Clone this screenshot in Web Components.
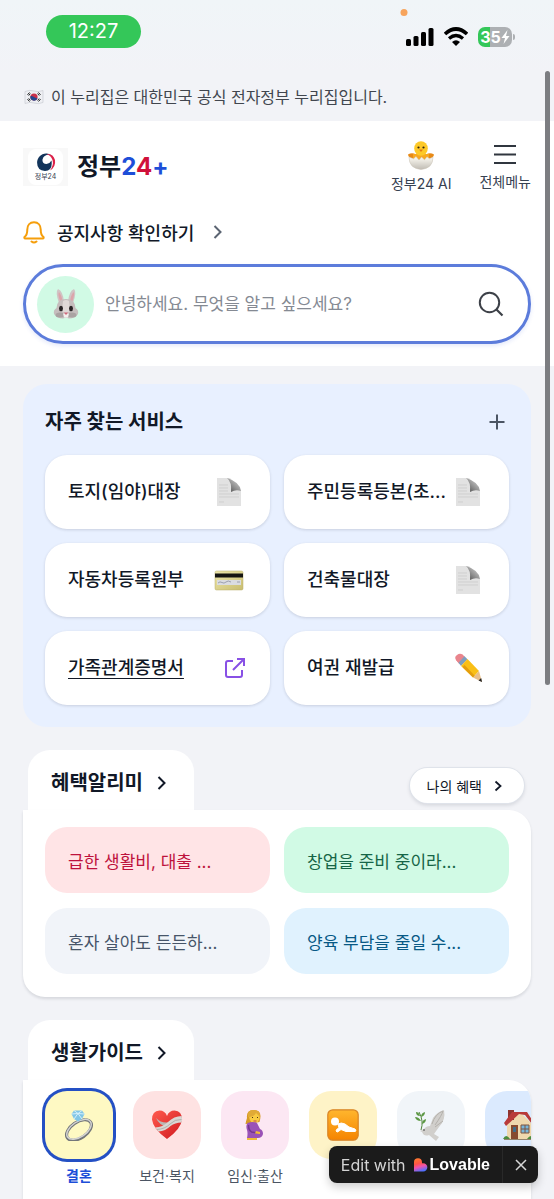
<!DOCTYPE html>
<html lang="ko">
<head>
<meta charset="utf-8">
<meta name="viewport" content="width=device-width, initial-scale=1">
<title>정부24+</title>
<style>
  :root {
    --ink: #111827;
    --muted: #4b5563;
    --blue: #1d4ed8;
    --red: #d0103a;
    --surface: #fff;
    --page: #f2f3f7;
    --radius: 22px;
    --gutter: 23px;
  }
  html, body { margin: 0; }
  body {
    font-family: Inter, "Noto Sans CJK KR", sans-serif;
    font-size: 18px;
    color: var(--ink);
    background: var(--page);
  }
</style>
</head>
<body>
<gov-app></gov-app>

<script>
const ICONS = {
  flag: [20, 16, `<path d="M1 2.500Q6 .5 10 2t9-.5v12Q14 15.500 10 14t-9 .5z" fill="#eeeff3" stroke="#c9ccd2" stroke-width=".7"/>
    <circle cx="10" cy="8" r="3.600" fill="#c8304a"/><path d="M6.500 7a3.600 3.600 0 0 0 7 2Q12 9.500 10 8T6.500 7z" fill="#23478f"/>
    <path d="M3.500 5.800l2-2.300M4.700 6.600l1.600-2M14.500 3.500l2 2.300M13.600 4.500l1.600 2M3.500 10.200l2 2.300M4.700 9.400l1.600 2M14.500 12.500l2-2.300M13.600 11.500l1.600-2" stroke="#222" stroke-width="1"/>`],
  emblem: [20, 19, `<path d="M1.200 8A9 9 0 0 1 15 2Q8 1 6.500 6.500q-.5 4.500 4 4.500 3.500-.5 5-3.500 1.500 10-6.500 10.500Q.2 17.500 1.200 8z" fill="#12345b"/>
    <path d="M10.500 1Q17 0 19 7q1 7-5 10.500Q18 12 16.500 7 15 2.500 10.500 1z" fill="#dc2149"/>`],
  chick: [28, 30, `<defs><linearGradient id="s" x2="0" y2="1"><stop stop-color="#fffdf5"/><stop offset="1" stop-color="#c0bcb4"/></linearGradient></defs>
    <path d="M1 14.500q4-2.500 8 0v5l-4-1Q1.500 18 1 14.500zM27 14.500q-4-2.500-8 0v5l4-1q3.500-.5 4-4z" fill="#e88a16"/>
    <path d="M6 14h16v8H6z" fill="#f8a820"/><ellipse cx="14" cy="8.500" rx="6.800" ry="7.300" fill="#fdc928"/>
    <path d="M2 17l4.500 1.800L9 16.500l3 3.500 2.500-3 3 2.800 2.500-3 2.500 2 3.500-1.800Q26 28.500 14 29.500 2 28.500 2 17z" fill="url(#s)" stroke="#c8c0b2" stroke-width=".5"/>
    <circle cx="11.500" cy="7.500" r="1.100" fill="#302311"/><circle cx="16.500" cy="7.500" r="1.100" fill="#302311"/><path d="M12 9.500h4l-2 2.500z" fill="#e47b16"/>`],
  menu: [22, 26, `<path d="M0 4h22M0 12.500h22M0 21h22" stroke="#30363f" stroke-width="2"/>`],
  bell: [22, 24, `<path d="M11 2.200c-4.300 0-6.700 3.300-6.700 7.300 0 4.200-1.200 6.300-2.600 7.300-.7.700-.4 1.700.6 1.700h17.400c1 0 1.300-1 .6-1.700-1.400-1-2.600-3.100-2.600-7.300 0-4-2.400-7.300-6.700-7.300z" fill="none" stroke="#f59e0b" stroke-width="2" stroke-linejoin="round"/><path d="M8.500 21.500q2.500 2 5 0" fill="none" stroke="#f59e0b" stroke-width="2" stroke-linecap="round"/>`],
  chevron: [9, 14, `<path d="M1.500 1 7.500 7l-6 6" fill="none" stroke="currentColor" stroke-width="2"/>`],
  chevronSmall: [8, 12, `<path d="m1.500 1.500 5 4.500-5 4.500" fill="none" stroke="currentColor" stroke-width="1.800"/>`],
  rabbit: [28, 32, `<path d="M7 15Q3 4 6 1q5 2 6 13M16 14q1-11 6-13 3 3-1 14" fill="#d0c4c5"/><path d="M8 13Q5.500 6 7 4q2.500 3 3.500 9M18 13q1-6 3.500-9 1.500 2-1 9" fill="#dca4aa"/>
    <path d="M14 11q-9 0-9.500 9Q1 22 2 26q3 4.500 9 4.500l3-1 3 1q6 0 9-4.500 1-4-2.500-6-.5-9-9.500-9z" fill="#c5bdbd"/>
    <path d="M11 13q3-2 6 0l1 10-4 3-4-3z" fill="#dfd8d7"/><ellipse cx="8" cy="27" rx="4.500" ry="2.500" fill="#aaa2a2"/><ellipse cx="20" cy="27" rx="4.500" ry="2.500" fill="#aaa2a2"/>
    <ellipse cx="9" cy="20.500" rx="2" ry="2.700" fill="#292426"/><ellipse cx="19" cy="20.500" rx="2" ry="2.700" fill="#292426"/><path d="M11 25.500h6l-1 4h-4z" fill="#f4efee"/><path d="M11.800 24.500h4.400L14 27z" fill="#ce6578"/>`],
  search: [26, 26, `<circle cx="11.500" cy="11.500" r="9.700" fill="none" stroke="#3d4148" stroke-width="2"/><path d="m18.500 18.500 6 6" stroke="#3d4148" stroke-width="2.200"/>`],
  plus: [16, 16, `<path d="M8 .5v15M.5 8h15" stroke="#4b5563" stroke-width="2"/>`],
  document: [34, 30, `<defs><linearGradient id="d" x1="0" y1="1" x2=".8" y2=".1"><stop stop-color="#4a4a4a"/><stop offset=".5" stop-color="#8f8f8f"/><stop offset="1" stop-color="#ccc"/></linearGradient></defs>
    <path d="M5 1h13l11 13v15H5z" fill="#e2e2e2"/><path d="M15 1q5 4 4 14 5-3 10-1Q28 5 15 1z" fill="url(#d)"/>
    <path d="M7 8h9M7 11h9M7 14h9M7 17h20M7 20h20M7 25h5" stroke="#cfcfcf"/>`],
  card: [34, 30, `<defs><linearGradient id="c" x2="1" y2="1"><stop stop-color="#eee7ab"/><stop offset="1" stop-color="#c8bd70"/></linearGradient></defs>
    <rect x="3" y="6" width="28" height="19" rx="1.500" fill="url(#c)" stroke="#b9ae6b" stroke-width=".5"/><path d="M3 8.500h28v4H3z" fill="#151412"/><path d="M5 15h24v5H5z" fill="#dadce1"/><path d="M6 18q2-2 4-.5t4-.5 5 0M25 17h3" fill="none" stroke="#8d90a1" stroke-width=".8"/>`],
  external: [22, 22, `<path d="M9 4H4Q2 4 2 6v12q0 2 2 2h12q2 0 2-2v-5M13 2h7v7M19.500 2.500 9 13" fill="none" stroke="#8850e5" stroke-width="2"/>`],
  pencil: [34, 30, `<path d="M5 7Q3 4 6 2q3-2.500 6 0L8.500 11z" fill="#e9858d"/><path d="m5 7 3 3.500L14 4l-2.500-2.500z" fill="#e9858d"/><path d="m7.500 9.800 6-6.500 3 3-6.500 6.700z" fill="#7e9fbd"/>
    <path d="m10 13 6.500-7L28 18l-6 6.500z" fill="#f9bf16"/><path d="m11.500 14 2-2L24 23l-2 1.500z" fill="#e39d0e"/><path d="M22 24.500 28 18l3 11z" fill="#e9bf89"/><path d="m27.500 27.500 2.700-2.500.8 4z" fill="#242424"/>`],
  ring: [30, 32, `<ellipse cx="15" cy="21" rx="14" ry="8" transform="rotate(-34 15 21)" fill="none" stroke="#74777a" stroke-width="3.200"/><ellipse cx="15" cy="20.300" rx="13.800" ry="7.600" transform="rotate(-34 15 20.300)" fill="none" stroke="#d3d3d2" stroke-width="1.500"/>
    <path d="M7.500 5 10 1.500h8L20.500 5 18 10l-4 2.500L10 10z" fill="#82c6e6"/><path d="m10 1.500 4 3 4-3M7.500 5l6.500-.5 6.500.5M14 4.500 10 10M14 4.500l4 5.500" fill="none" stroke="#d4f0fb"/>`],
  heart: [32, 32, `<defs><linearGradient id="h" x2="1" y2="1"><stop stop-color="#ff5a4e"/><stop offset="1" stop-color="#cf191f"/></linearGradient></defs>
    <path d="M16 30Q2 20 1 10.500 1 2 8.500 1.500 14 1.500 16 7q2-5.500 7.500-5.500Q31 2 31 10.500 30 20 16 30z" fill="url(#h)"/>
    <path d="M5 9q6 6 14 4l-3 5Q8 16 5 9z" fill="#bbb6b3"/><path d="M4 18.500q8-.5 13-5.500 6-6 13.700-6 1 4-.2 6.500-6.500 0-11 3.500-5 5-12 5.500z" fill="#d9d6d3"/><path d="M6 20.500q8-.5 13-5.500t11.500-4.500" fill="none" stroke="#a8a4a1" stroke-width=".8"/>`],
  pregnant: [32, 32, `<path d="M15 1Q7 1 8 9q-1 3-1.500 6l6-.5 8-1.500Q24 1 15 1z" fill="#d69a25"/><circle cx="15.500" cy="8.500" r="5.200" fill="#f8cb42"/><path d="M9 8q6 0 8-4l4 4Q22 1 14 1 8 1 9 8z" fill="#e0aa36"/>
    <path d="M8.500 14q5.500-2 9.500 0l3 6q3 1 3 5-1 4-5 4H8q1-5 0-8-1.500-4 .5-7z" fill="#9a52b6"/><path d="M9.500 16q0 5 3 7l6 1" fill="none" stroke="#74358f" stroke-width="1.500"/><path d="m17 22 4 1v2l-5-.5z" fill="#f1bd37"/><path d="M8 29h10v2H8z" fill="#f1bd37"/><path d="M13.500 8v1M18.500 8v1" stroke="#4a321b"/><path d="M14.500 12h3" stroke="#bd4c46"/>`],
  baby: [32, 32, `<defs><linearGradient id="b" x2="0" y2="1"><stop stop-color="#ffb62e"/><stop offset="1" stop-color="#f58400"/></linearGradient></defs>
    <rect x=".8" y=".8" width="30.400" height="30.400" rx="5" fill="url(#b)" stroke="#d88426" stroke-width="1.200"/><circle cx="8" cy="12.500" r="4" fill="#fff"/>
    <path d="M9 22q0-2 3-3l-1-4q3-2 7 0l4 3 3 1 3 1q2 2 0 2.500H19l-5-2-2 1.500q-2 2-3 0z" fill="#fff" stroke="#fff" stroke-linejoin="round"/>`],
  dove: [32, 32, `<path d="M9 20q2-3 6-3l3-8Q22 3 29 1q2 10-5 17l-5 7 5 3-3 4-7-6Q9 28 7 23l-2-1z" fill="#d1cfcc"/><path d="M17 15Q20 5 28 2q-1 4-8 14" fill="none" stroke="#b4b1ac"/><path d="m20 18 8-6" stroke="#b4b1ac"/><circle cx="9" cy="21" r=".8" fill="#333"/>
    <path d="M6 21Q9 12 4 3" fill="none" stroke="#50863b"/><path d="M5 7Q1 7 1 3q3 0 4 4M6 12Q1 12 0 8q4 0 6 4M6 8q0-4 4-5 0 4-4 5M7 15q0-4 4-5 0 4-4 5" fill="#5d9845"/>`],
  house: [32, 32, `<path d="M4 14 17 3l11 11v17H4z" fill="#efd8ae"/><path d="M5 1h6v10H5z" fill="#8f3530"/><path d="M1 14 9 3h15l7 11-2 1L22 6 16 5 3 17z" fill="#b83a39"/><path d="M8 16h7v14H8z" fill="#874a2f"/><path d="M10 18h3v5h-3z" fill="#426c88"/><path d="M18 16h8v8h-8z" fill="#76b5dc" stroke="#7c5441"/><path d="M22 16v8M18 20h8" stroke="#7c5441"/><path d="M0 30q3-6 7 0M24 30q4-6 8 0" fill="#4d8c3d"/><path d="M1 30.500h30" stroke="#91836d"/>`],
  signal: [28, 20, `<rect y="12" width="5" height="7" rx="1.500"/><rect x="7.500" y="9" width="5" height="10" rx="1.500"/><rect x="15" y="5" width="5" height="14" rx="1.500"/><rect x="22.500" y="1" width="5" height="18" rx="1.500"/>`],
  wifi: [24, 20, `<path d="M1 7Q12-3 23 7" fill="none" stroke="#000" stroke-width="3.600"/><path d="M5 11.500q7-6 14 0" fill="none" stroke="#000" stroke-width="3.300"/><path d="M8 15q4-3.500 8 0l-4 4z"/>`],
  bolt: [9, 14, `<path d="M6.500 0 .5 8h3.500L2.500 14l6-8H5z" fill="#fff"/>`],
  lovable: [14, 14, `<defs><linearGradient id="l" x1=".2" y1="0" x2=".5" y2="1"><stop stop-color="#ff7a2f"/><stop offset=".4" stop-color="#ff5547"/><stop offset=".65" stop-color="#f052ae"/><stop offset="1" stop-color="#4d70ff"/></linearGradient></defs>
    <path d="M0 4.500a4 4 0 0 1 8-.3v1h1.200a4 4 0 0 1 0 8.300H0z" fill="url(#l)"/>`],
  close: [12, 12, `<path d="m1 1 10 10M11 1 1 11" stroke="#d7d7d7" stroke-width="1.500"/>`]
};

class GovIcon extends HTMLElement {
  constructor() {
    super();
    this.attachShadow({ mode: "open" });
  }
  connectedCallback() {
    const [w, h, body] = ICONS[this.getAttribute("name")];
    this.shadowRoot.innerHTML = `
      <style>:host { display: inline-flex; flex: none; } svg { display: block; }</style>
      <svg width="${w}" height="${h}" viewBox="0 0 ${w} ${h}" aria-hidden="true">${body}</svg>`;
  }
}

// Small base class: markup and styles come from the subclass
class GovElement extends HTMLElement {
  constructor() {
    super();
    this.attachShadow({ mode: "open" });
  }
  connectedCallback() {
    this.shadowRoot.innerHTML = `
      <style>
        * { box-sizing: border-box; }
        button { display: flex; font: inherit; color: inherit; background: none; border: 0; padding: 0; margin: 0; cursor: pointer; }
        a { color: inherit; text-decoration: none; }
        h1, h2, p { margin: 0; }
      </style>` + this.template();
  }
}

class StatusBar extends GovElement {
  template() {
    return `
      <style>
        :host { display: flex; justify-content: space-between; height: 72px; padding: 15px 39px 0 46px; position: relative; box-sizing: border-box; background: linear-gradient(#f0f5f8, var(--page)); }
        .time { width: 95px; height: 33px; border-radius: 17px; background: #34c759; color: #fff; font-size: 20px; line-height: 33px; text-align: center; }
        .right { display: flex; align-items: center; gap: 10px; height: 44px; }
        .battery { display: flex; align-items: center; justify-content: center; width: 34px; height: 20px; border-radius: 7px; background: linear-gradient(90deg, #34c759 35%, #adb0b3 35%); color: #fff; font-size: 16px; font-weight: 700; }
        .dot { position: absolute; top: 9px; left: 73%; width: 7px; height: 7px; border-radius: 50%; background: #f7a45c; transform: translateX(-50%); }
        .cap { width: 2px; height: 6px; border-radius: 0 2px 2px 0; background: #adb0b3; margin-left: -9px; }
      </style>
      <div class="time">12:27</div>
      <i class="dot"></i>
      <div class="right">
        <gov-icon name="signal"></gov-icon>
        <gov-icon name="wifi"></gov-icon>
        <div class="battery">35<gov-icon name="bolt"></gov-icon></div>
        <i class="cap"></i>
      </div>`;
  }
}

class OfficialBanner extends GovElement {
  template() {
    return `
      <style>
        :host { display: flex; align-items: center; gap: 7px; height: 49px; padding: 0 24px; font-size: 16px; line-height: 24px; color: #41464e; }
      </style>
      <gov-icon name="flag"></gov-icon>
      <slot></slot>`;
  }
}

class SiteHeader extends GovElement {
  template() {
    return `
      <style>
        :host { display: block; background: var(--surface); padding: 16px var(--gutter) 22px; }
        .top { display: flex; align-items: center; height: 60px; }
        .brand { display: flex; align-items: center; gap: 9px; flex: 1; }
        .mark { width: 45px; height: 38px; padding: 1px 5px; background: #f8f8f8; font-size: 7px; line-height: 8px; color: #374151; }
        .mark div { display: flex; flex-direction: column; align-items: center; justify-content: center; gap: 1px; height: 36px; border-radius: 8px; background: var(--surface); }
        h1 { font-size: 24px; line-height: 36px; font-weight: 700; }
        h1 b { font-weight: 700; color: var(--blue); }
        h1 b.red { color: var(--red); }
        .actions { display: flex; align-items: center; gap: 28px; font-size: 14px; line-height: 20px; color: #374151; }
        .actions button { flex-direction: column; align-items: center; gap: 4px; }
        .notice { display: flex; align-items: center; gap: 12px; height: 28px; margin: 21px 0 18px; font-weight: 500; }
        .notice gov-icon:last-child { margin-left: 7px; color: #5b6472; }
      </style>
      <div class="top">
        <div class="brand">
          <div class="mark"><div><gov-icon name="emblem"></gov-icon><span>정부24</span></div></div>
          <h1>정부<b>2</b><b class="red">4</b><b>+</b></h1>
        </div>
        <div class="actions">
          <button><gov-icon name="chick"></gov-icon><span>정부24 AI</span></button>
          <button><gov-icon name="menu"></gov-icon><span>전체메뉴</span></button>
        </div>
      </div>
      <a class="notice" href="#notice"><gov-icon name="bell"></gov-icon><span>공지사항 확인하기</span><gov-icon name="chevron"></gov-icon></a>
      <search-box></search-box>`;
  }
}

class SearchBox extends GovElement {
  template() {
    return `
      <style>
        :host { display: block; }
        form { display: flex; align-items: center; gap: 11px; height: 80px; padding: 0 24px 0 11px; border: 3px solid #5c7cdb; border-radius: 40px; background: var(--surface); box-shadow: 0 2px 4px #1d4ed81f; }
        .avatar { display: flex; align-items: center; justify-content: center; flex: none; width: 57px; height: 57px; border-radius: 50%; background: #d1fae5; }
        input { flex: 1; min-width: 0; padding: 0; border: 0; outline: 0; background: none; font: inherit; font-size: 17px; color: var(--ink); }
        input::placeholder { color: #858a93; opacity: 1; }
      </style>
      <form role="search">
        <span class="avatar"><gov-icon name="rabbit"></gov-icon></span>
        <input type="search" aria-label="검색어" placeholder="안녕하세요. 무엇을 알고 싶으세요?">
        <button type="button" aria-label="검색"><gov-icon name="search"></gov-icon></button>
      </form>`;
  }
}

class ServicePanel extends GovElement {
  template() {
    return `
      <style>
        :host { display: block; padding: 22px; border-radius: 24px; background: #e8f0ff; }
        header { display: flex; align-items: center; justify-content: space-between; height: 32px; margin-bottom: 17px; }
        header button { padding: 0 4px; }
        h2 { font-size: 20px; line-height: 32px; font-weight: 700; }
        .grid { display: grid; grid-template-columns: 1fr 1fr; gap: 14px; }
      </style>
      <header><h2>자주 찾는 서비스</h2><button aria-label="서비스 추가"><gov-icon name="plus"></gov-icon></button></header>
      <div class="grid"><slot></slot></div>`;
  }
}

class ServiceCard extends GovElement {
  template() {
    return `
      <style>
        :host { display: block; min-width: 0; }
        a { display: flex; align-items: center; justify-content: space-between; height: 74px; padding: 0 24px 0 var(--gutter); border-radius: var(--radius); background: var(--surface); box-shadow: 0 1px 3px #0f172a26; font-weight: 500; line-height: 28px; white-space: nowrap; }
        :host([active]) span { text-decoration: underline; text-underline-offset: 4px; }
      </style>
      <a href="#service"><span><slot></slot></span><gov-icon name="${this.getAttribute("icon")}"></gov-icon></a>`;
  }
}

// White panel with a folder tab on its top left
class TabPanel extends GovElement {
  template() {
    return `
      <style>
        :host { display: flex; flex-direction: column; }
        header { display: flex; align-items: center; justify-content: space-between; padding: 0 7px 0 5px; }
        h2 { font-size: 20px; line-height: 32px; font-weight: 700; }
        .tab { display: flex; align-items: center; gap: 14px; height: 60px; padding: 6px 28px 0 23px; border-radius: var(--radius) var(--radius) 0 0; background: var(--surface); }
        .body { flex: 1; border-radius: 0 var(--radius) var(--radius) var(--radius); background: var(--surface); box-shadow: 0 2px 3px #0f172a1f; overflow: hidden; }
        :host([open-end]) .body { border-radius: 0 var(--radius) 0 0; }
      </style>
      <header>
        <a class="tab" href="#more"><h2>${this.getAttribute("heading")}</h2><gov-icon name="chevron"></gov-icon></a>
        <slot name="action"></slot>
      </header>
      <div class="body"><slot></slot></div>`;
  }
}

class MyBenefit extends GovElement {
  template() {
    return `
      <style>
        :host { display: block; padding-top: 11px; }
        button { align-items: center; gap: 12px; height: 35px; padding: 0 22px 0 17px; border-radius: 18px; background: var(--surface); box-shadow: 0 0 0 1px #dfe3ea, 0 2px 4px #0f172a26; font-size: 14px; }
      </style>
      <button><span><slot></slot></span><gov-icon name="chevronSmall"></gov-icon></button>`;
  }
}

class BenefitGrid extends GovElement {
  template() {
    return `
      <style>
        :host { display: grid; grid-template-columns: 1fr 1fr; gap: 15px 14px; padding: 17px 22px 23px; }
      </style>
      <slot></slot>`;
  }
}

class BenefitPill extends GovElement {
  template() {
    return `
      <style>
        :host { display: block; min-width: 0; background: #f1f4f9; color: #475569; border-radius: var(--radius); }
        :host([tone="rose"]) { background: #ffe4e6; color: #be123c; }
        :host([tone="green"]) { background: #d1fae5; color: #166547; }
        :host([tone="sky"]) { background: #e0f2fe; color: #075985; }
        a { display: flex; align-items: center; height: 66px; padding: 0 var(--gutter); font-size: 17px; white-space: nowrap; }
      </style>
      <a href="#benefit"><slot></slot></a>`;
  }
}

class GuideList extends GovElement {
  template() {
    return `
      <style>
        :host { display: flex; gap: 20px; padding: 11px 0 12px 22px; overflow: hidden; }
      </style>
      <slot></slot>`;
  }
}

class GuideItem extends GovElement {
  template() {
    return `
      <style>
        :host { display: block; flex: none; width: 68px; }
        button { flex-direction: column; align-items: center; gap: 7px; width: 100%; font-size: 14px; line-height: 20px; color: var(--muted); white-space: nowrap; }
        .tile { display: flex; align-items: center; justify-content: center; width: 68px; height: 68px; border-radius: var(--radius); background: var(--tile); }
        :host([selected]) .tile { box-shadow: 0 0 0 3px #2450c4; }
        :host([selected]) button { color: var(--blue); font-weight: 700; }
      </style>
      <button aria-label="${this.getAttribute("label")}"><span class="tile"><gov-icon name="${this.getAttribute("icon")}"></gov-icon></span><span><slot></slot></span></button>`;
  }
}

class LovableBadge extends GovElement {
  template() {
    return `
      <style>
        :host { position: fixed; right: 16px; bottom: 16px; display: flex; height: 37px; border-radius: 8px; background: #1b1b1b; color: #d4d4d4; font-size: 16px; box-shadow: 0 4px 10px #0003; }
        a { display: flex; align-items: center; padding: 0 12px; }
        a gov-icon { margin: 0 2px 0 8px; }
        b { color: #fff; font-family: "Liberation Sans", Inter, sans-serif; font-size: 16px; }
        button { align-items: center; justify-content: center; width: 36px; border-left: 1px solid #292929; }
      </style>
      <a href="#edit"><span>Edit with</span><gov-icon name="lovable"></gov-icon><b>Lovable</b></a>
      <button aria-label="닫기"><gov-icon name="close"></gov-icon></button>`;
  }
}

class GovApp extends GovElement {
  template() {
    return `
      <style>
        :host { display: flex; flex-direction: column; min-height: 100vh; }
        main { display: flex; flex-direction: column; flex: 1; gap: 23px; padding: 18px var(--gutter) 0; }
        .last { flex: 1; }
        .thumb { position: fixed; top: 71px; right: 4px; width: 5px; height: 614px; border-radius: 3px; background: #7c7d81; }
      </style>
      <status-bar></status-bar>
      <official-banner>이 누리집은 대한민국 공식 전자정부 누리집입니다.</official-banner>
      <site-header></site-header>
      <main>
        <service-panel>
          <service-card icon="document">토지(임야)대장</service-card>
          <service-card icon="document">주민등록등본(초...</service-card>
          <service-card icon="card">자동차등록원부</service-card>
          <service-card icon="document">건축물대장</service-card>
          <service-card icon="external" active>가족관계증명서</service-card>
          <service-card icon="pencil">여권 재발급</service-card>
        </service-panel>
        <tab-panel heading="혜택알리미">
          <my-benefit slot="action">나의 혜택</my-benefit>
          <benefit-grid>
            <benefit-pill tone="rose">급한 생활비, 대출 ...</benefit-pill>
            <benefit-pill tone="green">창업을 준비 중이라...</benefit-pill>
            <benefit-pill>혼자 살아도 든든하...</benefit-pill>
            <benefit-pill tone="sky">양육 부담을 줄일 수...</benefit-pill>
          </benefit-grid>
        </tab-panel>
        <tab-panel class="last" heading="생활가이드" open-end>
          <guide-list>
            <guide-item icon="ring" label="결혼" style="--tile:#fef9c3" selected>결혼</guide-item>
            <guide-item icon="heart" label="보건·복지" style="--tile:#fee2e2">보건·복지</guide-item>
            <guide-item icon="pregnant" label="임신·출산" style="--tile:#fce7f3">임신·출산</guide-item>
            <guide-item icon="baby" label="육아" style="--tile:#fef3c7"></guide-item>
            <guide-item icon="dove" label="사망" style="--tile:#f1f5f9"></guide-item>
            <guide-item icon="house" label="주거" style="--tile:#dbeafe"></guide-item>
          </guide-list>
        </tab-panel>
      </main>
      <div class="thumb"></div>
      <lovable-badge></lovable-badge>`;
  }
}

customElements.define("gov-icon", GovIcon);
customElements.define("status-bar", StatusBar);
customElements.define("official-banner", OfficialBanner);
customElements.define("search-box", SearchBox);
customElements.define("site-header", SiteHeader);
customElements.define("service-card", ServiceCard);
customElements.define("service-panel", ServicePanel);
customElements.define("my-benefit", MyBenefit);
customElements.define("benefit-pill", BenefitPill);
customElements.define("benefit-grid", BenefitGrid);
customElements.define("guide-item", GuideItem);
customElements.define("guide-list", GuideList);
customElements.define("tab-panel", TabPanel);
customElements.define("lovable-badge", LovableBadge);
customElements.define("gov-app", GovApp);
</script>
</body>
</html>
